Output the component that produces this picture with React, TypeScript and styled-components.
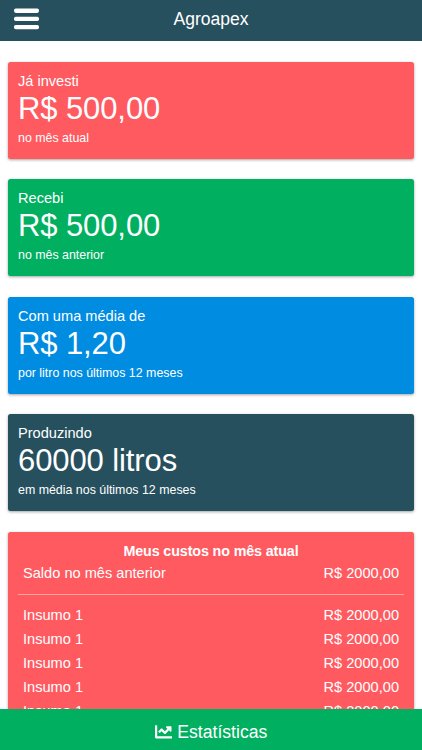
import React from "react";
import styled, { createGlobalStyle } from "styled-components";
import { FaChartLine } from "react-icons/fa";

const GlobalStyle = createGlobalStyle`
  * { box-sizing: border-box; }
  body {
    margin: 0;
    background: #fff;
    font-family: "Liberation Sans", Arial, sans-serif;
    color: #fff;
  }
`;

const Screen = styled.div`
  display: flex;
  flex-direction: column;
  height: 100vh;
  overflow: hidden;
`;

const Header = styled.header`
  flex: 0 0 41px;
  display: grid;
  grid-template-columns: 53px 1fr 53px;
  align-items: start;
  background: #27505e;
`;

const MenuButton = styled.button`
  display: flex;
  margin: 8px 0 0 14px;
  padding: 0;
  border: 0;
  background: none;
  color: #fff;
`;

const Brand = styled.h1`
  margin: 9px 0 0;
  font-size: 17.55px;
  line-height: 20px;
  font-weight: 400;
  text-align: center;
`;

const Content = styled.main`
  flex: 1;
  min-height: 0;
  display: flex;
  flex-direction: column;
  gap: 20.8px;
  padding: 21px 8px 0;
  overflow: hidden;
`;

const Card = styled.section<{ $color: string }>`
  flex: none;
  padding: 10px;
  border-radius: 2.5px;
  background: ${(p) => p.$color};
  box-shadow: 0 1px 3px rgba(0, 0, 0, 0.36);
`;

const SummaryCard = styled(Card)`
  height: 96.7px;
`;

const Label = styled.div`
  font-size: 14.6px;
  line-height: 18px;
`;

const Amount = styled.div`
  font-size: 31px;
  line-height: 37px;
  letter-spacing: -0.1px;
`;

const Note = styled.div`
  font-size: 12.4px;
  line-height: 15px;
  margin-top: 4px;
`;

const CostTitle = styled.h2`
  margin: 0;
  font-size: 14.3px;
  line-height: 18px;
  font-weight: 700;
  letter-spacing: -0.12px;
  text-align: center;
`;

const CostRow = styled.div`
  display: flex;
  justify-content: space-between;
  padding: 0 5px;
  font-size: 14.6px;
  line-height: 23.8px;
`;

const Divider = styled.hr`
  height: 1px;
  margin: 7.5px 0 9.8px;
  border: 0;
  background: rgba(255, 255, 255, 0.45);
`;

const CostList = styled.div`
  padding-top: 2.4px;
`;

const StatsButton = styled.button`
  flex: 0 0 41px;
  display: flex;
  align-items: center;
  justify-content: center;
  gap: 5px;
  padding: 4px 0 0;
  border: 0;
  background: #00b060;
  color: #fff;
  font: 17.6px/20px "Liberation Sans", Arial, sans-serif;
`;

const summaries = [
  { color: "#ff5a60", label: "Já investi", amount: "R$ 500,00", note: "no mês atual" },
  { color: "#00b060", label: "Recebi", amount: "R$ 500,00", note: "no mês anterior" },
  { color: "#008ce0", label: "Com uma média de", amount: "R$ 1,20", note: "por litro nos últimos 12 meses" },
  { color: "#27505e", label: "Produzindo", amount: "60000 litros", note: "em média nos últimos 12 meses" },
];

const costs = Array.from({ length: 5 }, () => ({ name: "Insumo 1", value: "R$ 2000,00" }));

export default function App() {
  return (
    <Screen>
      <GlobalStyle />
      <Header>
        <MenuButton aria-label="Menu">
          <svg width="25" height="22" viewBox="0 0 25 22" fill="currentColor">
            <rect y="0.6" width="25" height="4.3" rx="1.8" />
            <rect y="8.8" width="25" height="4.3" rx="1.8" />
            <rect y="17" width="25" height="4.3" rx="1.8" />
          </svg>
        </MenuButton>
        <Brand>Agroapex</Brand>
      </Header>
      <Content>
        {summaries.map((s) => (
          <SummaryCard key={s.label} $color={s.color}>
            <Label>{s.label}</Label>
            <Amount>{s.amount}</Amount>
            <Note>{s.note}</Note>
          </SummaryCard>
        ))}
        <Card $color="#ff5a60">
          <CostTitle>Meus custos no mês atual</CostTitle>
          <CostList>
            <CostRow>
              <span>Saldo no mês anterior</span>
              <span>R$ 2000,00</span>
            </CostRow>
            <Divider />
            {costs.map((c, i) => (
              <CostRow key={i}>
                <span>{c.name}</span>
                <span>{c.value}</span>
              </CostRow>
            ))}
          </CostList>
        </Card>
      </Content>
      <StatsButton>
        <FaChartLine size={17.6} />
        <span>Estatísticas</span>
      </StatsButton>
    </Screen>
  );
}
